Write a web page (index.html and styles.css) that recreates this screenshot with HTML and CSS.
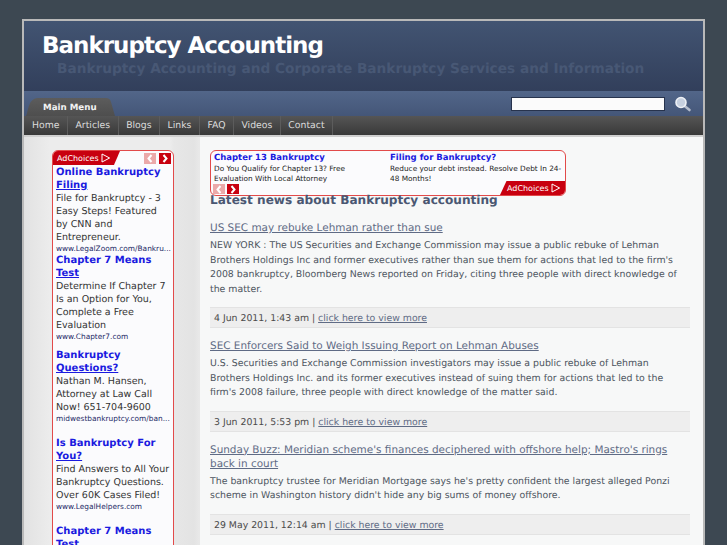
FILE: index.html
```html
<!DOCTYPE html>
<html lang="en">
<head>
<meta charset="utf-8">
<title>Bankruptcy Accounting</title>
<link rel="stylesheet" href="styles.css">
</head>
<body>
<div class="page">
  <header class="masthead">
    <h1 class="site-title">Bankruptcy Accounting</h1>
    <p class="site-tag">Bankruptcy Accounting and Corporate Bankruptcy Services and Information</p>
  </header>
  <div class="tabbar">
    <div class="tab">Main Menu</div>
    <div class="search">
      <input class="search-box" type="text" aria-label="Search">
      <svg class="search-icon" width="18" height="16" viewBox="0 0 18 16"><line x1="10" y1="9.5" x2="15.5" y2="14" stroke="#b4bccb" stroke-width="2.6" stroke-linecap="round"/><circle cx="7" cy="6.5" r="5" fill="#c6d0df" stroke="#eef1f6" stroke-width="1.6"/></svg>
    </div>
  </div>
  <nav class="nav">
    <a>Home</a><a>Articles</a><a>Blogs</a><a>Links</a><a>FAQ</a><a>Videos</a><a>Contact</a>
  </nav>
  <div class="body">
    <aside class="side">
      <div class="sky">
        <div class="sky-top">
          <span class="adchoices adchoices-l">AdChoices <svg width="10" height="10" viewBox="0 0 10 10"><path d="M1 1 8.6 5 1 9Z" fill="none" stroke="#fff"/></svg></span>
          <span class="arrows">
            <span class="arr off"><svg width="8" height="9" viewBox="0 0 8 9"><path d="M5.5 1 2.5 4.5 5.5 8" fill="none" stroke="#fff" stroke-width="2"/></svg></span>
            <span class="arr"><svg width="8" height="9" viewBox="0 0 8 9"><path d="M2.5 1 5.5 4.5 2.5 8" fill="none" stroke="#fff" stroke-width="2"/></svg></span>
          </span>
        </div>
        <div class="ad"><a class="ad-t">Online Bankruptcy <u>Filing</u></a><p>File for Bankruptcy - 3 Easy Steps! Featured by CNN and Entrepreneur.</p><span class="ad-u">www.LegalZoom.com/Bankru...</span></div>
        <div class="ad"><a class="ad-t">Chapter 7 Means <u>Test</u></a><p>Determine If Chapter 7 Is an Option for You, Complete a Free Evaluation</p><span class="ad-u">www.Chapter7.com</span></div>
        <div class="ad gap-s"><a class="ad-t">Bankruptcy <u>Questions?</u></a><p>Nathan M. Hansen, Attorney at Law Call Now! 651-704-9600</p><span class="ad-u">midwestbankruptcy.com/ban...</span></div>
        <div class="ad gap-l"><a class="ad-t">Is Bankruptcy For <u>You?</u></a><p>Find Answers to All Your Bankruptcy Questions. Over 60K Cases Filed!</p><span class="ad-u">www.LegalHelpers.com</span></div>
        <div class="ad gap-l"><a class="ad-t">Chapter 7 Means <u>Test</u></a></div>
      </div>
    </aside>
    <main class="main">
      <div class="banner">
        <div class="banner-ads">
          <div class="b-ad"><a class="b-t">Chapter 13 Bankruptcy</a><p>Do You Qualify for Chapter 13? Free Evaluation With Local Attorney</p></div>
          <div class="b-ad"><a class="b-t">Filing for Bankruptcy?</a><p>Reduce your debt instead. Resolve Debt In 24-48 Months!</p></div>
        </div>
        <div class="banner-foot">
          <span class="arrows">
            <span class="arr off"><svg width="8" height="9" viewBox="0 0 8 9"><path d="M5.5 1 2.5 4.5 5.5 8" fill="none" stroke="#fff" stroke-width="2"/></svg></span>
            <span class="arr"><svg width="8" height="9" viewBox="0 0 8 9"><path d="M2.5 1 5.5 4.5 2.5 8" fill="none" stroke="#fff" stroke-width="2"/></svg></span>
          </span>
          <span class="adchoices adchoices-r">AdChoices <svg width="10" height="10" viewBox="0 0 10 10"><path d="M1 1 8.6 5 1 9Z" fill="none" stroke="#fff"/></svg></span>
        </div>
      </div>
      <h2 class="heading">Latest news about Bankruptcy accounting</h2>
      <article class="item">
        <h3><a>US SEC may rebuke Lehman rather than sue</a></h3>
        <p>NEW YORK : The US Securities and Exchange Commission may issue a public rebuke of Lehman Brothers Holdings Inc and former executives rather than sue them for actions that led to the firm's 2008 bankruptcy, Bloomberg News reported on Friday, citing three people with direct knowledge of the matter.</p>
        <div class="meta">4 Jun 2011, 1:43 am | <a>click here to view more</a></div>
      </article>
      <article class="item">
        <h3><a>SEC Enforcers Said to Weigh Issuing Report on Lehman Abuses</a></h3>
        <p>U.S. Securities and Exchange Commission investigators may issue a public rebuke of Lehman Brothers Holdings Inc. and its former executives instead of suing them for actions that led to the firm's 2008 failure, three people with direct knowledge of the matter said.</p>
        <div class="meta">3 Jun 2011, 5:53 pm | <a>click here to view more</a></div>
      </article>
      <article class="item">
        <h3><a>Sunday Buzz: Meridian scheme's finances deciphered with offshore help; Mastro's rings back in court</a></h3>
        <p>The bankruptcy trustee for Meridian Mortgage says he's pretty confident the largest alleged Ponzi scheme in Washington history didn't hide any big sums of money offshore.</p>
        <div class="meta">29 May 2011, 12:14 am | <a>click here to view more</a></div>
      </article>
    </main>
  </div>
</div>
</body>
</html>
```
FILE: styles.css
```css
* { box-sizing: border-box; }
html, body { margin: 0; height: 100%; overflow: hidden; }
body { background: #3d4852; font-family: "DejaVu Sans", sans-serif; padding: 19px 0 0 22px; text-rendering: geometricPrecision; }
p, h1, h2, h3 { margin: 0; }
.page { width: 683px; height: 526px; border: 2px solid #b9b9b9; border-bottom: 0; background: #f7f8f8; display: flex; flex-direction: column; overflow: hidden; }
.masthead { height: 70px; flex: none; background: linear-gradient(#425472, #323f5b); padding: 11px 0 0 18px; }
.site-title { font-size: 23px; letter-spacing: -1px; line-height: 28px; font-weight: 700; color: #fff; }
.site-tag { font-size: 13.7px; line-height: 18px; font-weight: 700; color: #485875; margin: 0 0 0 15px; white-space: nowrap; }
.tabbar { height: 25px; flex: none; background: linear-gradient(#526689, #445678); display: flex; align-items: flex-end; justify-content: space-between; padding-left: 2px; }
.tab { width: 89px; height: 18px; background: linear-gradient(#5c5c5c, #4e4e4e); clip-path: path("M0 18 C2 14 2 4 8 1 Q10 0 12 0 L80 0 Q84 0 85 4 L89 18 Z"); color: #f2f2f2; font-size: 8.7px; font-weight: 700; line-height: 21px; padding-left: 17px; }
.search { display: flex; align-items: center; align-self: center; gap: 9px; padding-right: 11px; }
.search-box { width: 154px; height: 14px; border: 1px solid #27334d; background: #fbfbfb; padding: 0; display: block; }
.search-icon { display: block; }
.nav { height: 19px; flex: none; background: linear-gradient(#555 0, #474747 50%, #393939 100%); display: flex; padding-left: 0.5px; }
.nav a { color: #dcdcdc; font-size: 9.3px; line-height: 20px; height: 19px; padding: 0 7.5px; border-right: 1px solid #5c5c5c; }
.body { flex: 1; min-height: 0; display: flex; border-top: 2px solid #cfcfcf; }
.side { width: 176px; flex: none; padding: 13px 0 0 28px; background: linear-gradient(90deg, #e2e2e2 0, #ececec 26px, #ececec 146px, #e7e7e7 150px, #e3e3e3 170px, #e8e8e8 175px); }
.sky { width: 122px; height: 500px; background: #fbfbfd; border: 1px solid #e24a4a; border-radius: 6px 6px 0 0; overflow: hidden; }
.sky-top { height: 15px; display: flex; justify-content: space-between; align-items: flex-start; }
.adchoices { background: #c8000f; color: #fff; font-size: 8px; line-height: 13px; display: inline-flex; align-items: center; gap: 2px; white-space: nowrap; }
.adchoices-l { width: 67px; height: 14px; padding-left: 4px; clip-path: polygon(0 0, 100% 0, 91% 100%, 0 100%); }
.arrows { display: flex; gap: 3px; }
.sky-top .arrows { padding: 2px 2px 0 0; }
.arr { width: 12px; height: 11px; background: #c8000f; display: flex; align-items: center; justify-content: center; }
.arr.off { background: #eba9a9; }
.ad { padding: 0 2px 0 3px; }
.ad.gap-s { margin-top: 7px; }
.ad.gap-l { margin-top: 13px; }
.ad-t { display: block; color: #1a1adf; font-size: 10px; line-height: 13px; font-weight: 700; text-decoration: none; }
.ad p { color: #333; font-size: 9.5px; line-height: 13px; }
.ad-u { display: block; color: #1e2a66; font-size: 7.4px; line-height: 10px; white-space: nowrap; }
.main { flex: 1; padding: 13px 13px 0 10px; min-width: 0; }
.banner { width: 356px; height: 46px; border: 1px solid #e24a4a; border-radius: 6px; background: #fbfbfd; overflow: hidden; }
.banner-ads { display: grid; grid-template-columns: 176px 1fr; padding: 1px 0 0 3px; height: 30px; }
.b-ad:first-child { padding-right: 28px; }
.b-t { display: block; color: #1a1adf; font-size: 8.5px; line-height: 12px; font-weight: 700; }
.b-ad p { color: #222; font-size: 7.35px; line-height: 10px; }
.banner-foot { display: flex; justify-content: space-between; align-items: flex-end; height: 14px; }
.banner-foot .arrows { padding: 0 0 1px 2px; gap: 2px; }
.banner-foot .arr { height: 10px; }
.adchoices-r { width: 65px; height: 14px; padding-left: 7px; clip-path: polygon(10% 0, 100% 0, 100% 100%, 0 100%); }
.heading { font-size: 12.1px; line-height: 16px; font-weight: 700; color: #4a5772; margin: -4px 0 13px; }
.item h3 { font-size: 10.45px; line-height: 14px; font-weight: 400; color: #5f6b85; margin: 0 0 4px; }
.item a { text-decoration: underline; }
.item p { font-size: 9.37px; line-height: 14.5px; color: #4d5560; }
.meta { margin: 10px 0 11px; height: 21px; background: #eeeeee; border-top: 1px solid #e3e3e3; border-bottom: 1px solid #e3e3e3; font-size: 9.35px; line-height: 21px; color: #4a4a4a; padding-left: 4px; }
.meta a { color: #5f6b85; }
```
